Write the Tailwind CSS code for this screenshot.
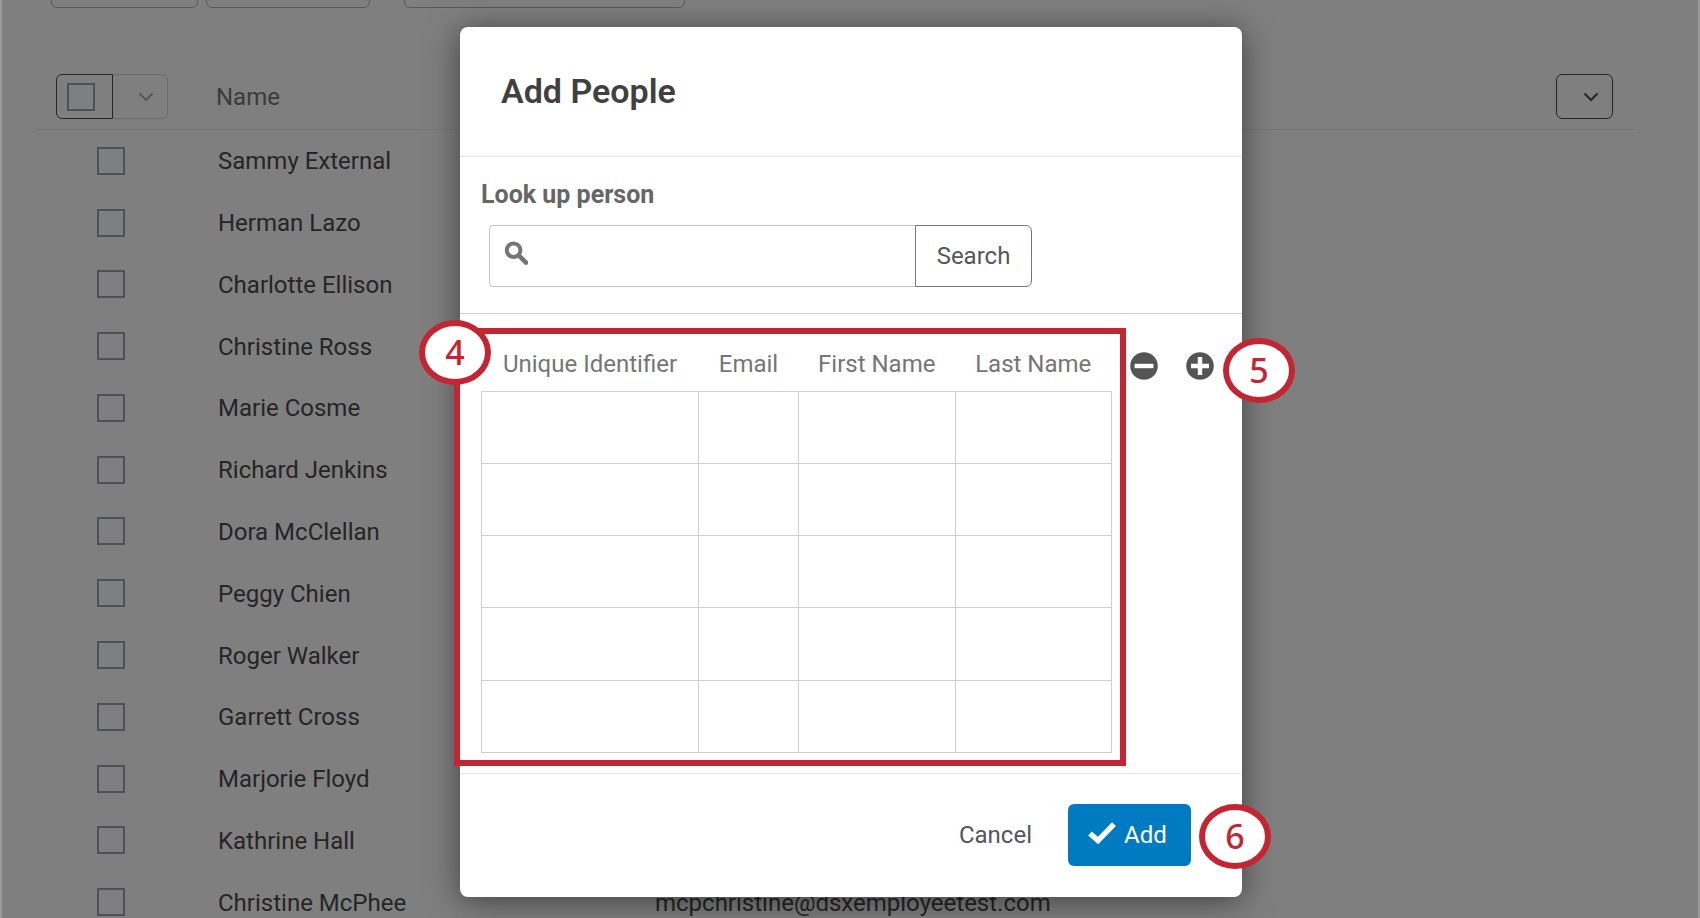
<!DOCTYPE html>
<html lang="en">
<head>
    <meta charset="UTF-8">
    <meta name="viewport" content="width=device-width, initial-scale=1.0">
    <title>Add People</title>
    <script src="https://cdn.jsdelivr.net/npm/@tailwindcss/browser@4"></script>
</head>
<body class="bg-white h-screen overflow-hidden font-['Roboto','Liberation_Sans',sans-serif] text-2xl text-[#4b4b4b]">
    <div class="relative border-[#999] border-x-2 h-full overflow-hidden">
        <!-- People list -->
        <main class="pr-[63px] pl-[33px]">
            <div class="flex items-end pl-4 h-2 overflow-hidden">
                <button type="button" aria-label="Filter" class="border border-[#b4b4b4] rounded-md w-[147px] h-11 shrink-0"></button>
                <button type="button" aria-label="Sort" class="ml-2 border border-[#b4b4b4] rounded-md w-[164px] h-11 shrink-0"></button>
                <button type="button" aria-label="Search list" class="ml-[34px] border border-[#b4b4b4] rounded-md w-[281px] h-11 shrink-0"></button>
            </div>
            <table class="mt-14 w-full h-[869px] border-separate border-spacing-0 table-fixed">
                <thead>
                    <tr class="h-[66px]">
                        <th class="p-0 pl-[21px] border-[#ececec] border-b w-[180px] text-left">
                            <div class="flex w-28 h-[45px]">
                                <label class="flex items-center pl-2.5 border border-[#4b4b4b] rounded-l-md w-[57px]">
                                    <input type="checkbox" aria-label="Select all" class="border-2 border-[#9aa0aa] size-7 appearance-none">
                                </label>
                                <button type="button" aria-label="Selection options" class="flex flex-1 justify-center items-center pl-3 border border-[#d8d8d8] border-l-0 rounded-r-md">
                                    <svg class="w-4 h-4" viewBox="0 0 16 16" fill="none" stroke="#a8a8a8" stroke-width="1.8"><path d="M1.5 4.5 8 11l6.5-6.5"/></svg>
                                </button>
                            </div>
                        </th>
                        <th class="p-0 pl-px border-[#ececec] border-b w-[440px] font-normal text-[#767676] text-left">Name</th>
                        <th class="p-0 border-[#ececec] border-b"></th>
                        <th class="p-0 pr-[22px] border-[#ececec] border-b w-[100px]">
                            <button type="button" aria-label="Columns" class="flex justify-center items-center ml-auto pl-3 border border-[#4b4b4b] rounded-md w-[57px] h-[45px]">
                                <svg class="w-4 h-4" viewBox="0 0 16 16" fill="none" stroke="#4b4b4b" stroke-width="2"><path d="M1.5 4.5 8 11l6.5-6.5"/></svg>
                            </button>
                        </th>
                    </tr>
                </thead>
                <tbody id="people"></tbody>
            </table>
        </main>

        <!-- Dialog -->
        <div class="absolute inset-0 flex justify-center items-start bg-black/50 pt-[27px] pl-0.5">
            <div role="dialog" aria-labelledby="dialog-title" class="relative bg-white shadow-[0_4px_32px_rgba(0,0,0,0.5)] rounded-lg w-[782px]">
                <header class="flex items-center px-[41px] border-[#e6e6e6] border-b h-[130px]">
                    <h1 id="dialog-title" class="font-semibold text-[#404040] text-[34px]">Add People</h1>
                </header>

                <form class="px-[21px] pt-[22px] pb-[26px] border-[#cfcfcf] border-b">
                    <label for="lookup" class="block h-8 font-bold text-[#666] text-[25px] leading-8">Look up person</label>
                    <div class="relative flex mt-3.5 ml-2 h-[62px]">
                        <input id="lookup" type="text" class="pl-14 border border-[#c4c4c4] border-r-0 rounded-l w-[426px] outline-none">
                        <svg class="top-4 left-[15px] absolute w-6 h-6" viewBox="0 0 24 24" fill="none" stroke="#757575"><circle cx="9.6" cy="9.2" r="6.8" stroke-width="4"/><path d="m15 14.6 7 7" stroke-width="4.6" stroke-linecap="round"/></svg>
                        <button type="button" class="border border-[#75787b] rounded-r-md w-[117px] text-[#53565a]">Search</button>
                    </div>
                </form>

                <section class="relative flex items-start px-[21px] pt-[22px] pb-5">
                    <table class="w-[631px] h-[417px] border-collapse table-fixed">
                        <thead>
                            <tr class="h-[55px] text-[#757575]">
                                <th class="p-0 pt-0.5 w-[217px] font-normal">Unique Identifier</th>
                                <th class="p-0 pt-0.5 w-[100px] font-normal">Email</th>
                                <th class="p-0 pt-0.5 font-normal">First Name</th>
                                <th class="p-0 pt-0.5 font-normal">Last Name</th>
                            </tr>
                        </thead>
                        <tbody id="entries"></tbody>
                    </table>
                    <div class="flex gap-7 mt-4 ml-[18px]">
                        <button type="button" aria-label="Remove row">
                            <svg class="w-7 h-7" viewBox="0 0 28 28"><circle cx="14" cy="14" r="13.8" fill="#555"/><path d="M4.6 14h18.8" stroke="#fff" stroke-width="4.4"/></svg>
                        </button>
                        <button type="button" aria-label="Add row">
                            <svg class="w-7 h-7" viewBox="0 0 28 28"><circle cx="14" cy="14" r="13.8" fill="#555"/><path d="M5 14h18M14 5v18" stroke="#fff" stroke-width="4.4"/></svg>
                        </button>
                    </div>
                    <div class="top-3.5 bottom-[7px] -left-1.5 absolute border-[#c32532] border-6 w-[672px] pointer-events-none"></div>
                </section>

                <footer class="flex justify-end items-center pt-[30px] pr-[51px] pb-[31px] border-[#e6e6e6] border-t">
                    <button type="button" class="mr-9 text-[#53565a]">Cancel</button>
                    <button type="submit" class="flex items-center gap-2 bg-[#007ac0] pl-5 rounded-md w-[123px] h-[62px] text-white">
                        <svg class="mb-1 w-7 h-6" viewBox="0 0 28 24" fill="none" stroke="#fff" stroke-width="5.4"><path d="m2 12.4 8 7.2L26 3.2"/></svg>
                        Add
                    </button>
                </footer>

                <!-- Step markers -->
                <span class="top-[293px] -left-[41px] absolute flex justify-center items-center bg-white border-[#c32532] border-6 rounded-[50%] w-[72px] h-[65px] font-['Noto_Sans',sans-serif] font-medium text-[#c32532] text-[34px]">4</span>
                <span class="top-[311px] left-[763px] absolute flex justify-center items-center bg-white border-[#c32532] border-6 rounded-[50%] w-[72px] h-[65px] font-['Noto_Sans',sans-serif] font-medium text-[#c32532] text-[34px]">5</span>
                <span class="top-[777px] left-[739px] absolute flex justify-center items-center bg-white border-[#c32532] border-6 rounded-[50%] w-[72px] h-[65px] font-['Noto_Sans',sans-serif] font-medium text-[#c32532] text-[34px]">6</span>
            </div>
        </div>
    </div>
    <script>
    const people = [
        { name: 'Sammy External' },
        { name: 'Herman Lazo' },
        { name: 'Charlotte Ellison' },
        { name: 'Christine Ross' },
        { name: 'Marie Cosme' },
        { name: 'Richard Jenkins' },
        { name: 'Dora McClellan' },
        { name: 'Peggy Chien' },
        { name: 'Roger Walker' },
        { name: 'Garrett Cross' },
        { name: 'Marjorie Floyd' },
        { name: 'Kathrine Hall' },
        { name: 'Christine McPhee', email: 'mcpchristine@dsxemployeetest.com' },
    ];
    const fields = ['Unique Identifier', 'Email', 'First Name', 'Last Name'];

    document.getElementById('people').innerHTML = people.map(person => `
        <tr>
            <td class="p-0 pl-[62px]"><input type="checkbox" aria-label="${person.name}" class="block border-2 border-[#9aa0aa] size-7 appearance-none"></td>
            <td class="p-0 pt-px pl-[3px]">${person.name}</td>
            <td class="p-0 pt-px" colspan="2">${person.email || ''}</td>
        </tr>`).join('');

    document.getElementById('entries').innerHTML = [1, 2, 3, 4, 5].map(row => `
        <tr>${fields.map(field => `
            <td class="p-0 border border-[#cfcfcf]"><input type="text" aria-label="${field} ${row}" class="block px-3 w-full outline-none"></td>`).join('')}
        </tr>`).join('');
    </script>
</body>
</html>
